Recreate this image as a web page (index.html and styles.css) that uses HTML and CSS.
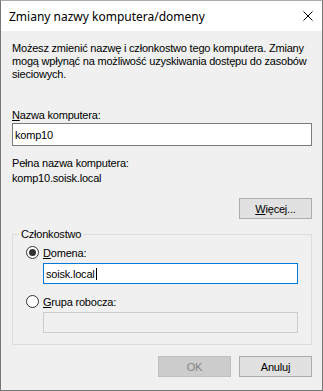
FILE: index.html
```html
<!DOCTYPE html>
<html lang="pl">
<head>
<meta charset="utf-8">
<title>Zmiany nazwy komputera/domeny</title>
<link rel="stylesheet" href="styles.css">
</head>
<body>
<div class="window">
  <div class="titlebar">
    <span class="title">Zmiany nazwy komputera/domeny</span>
    <svg class="close" width="10" height="10" viewBox="0 0 10 10"><path d="M0.5 0.5 L9.5 9.5 M9.5 0.5 L0.5 9.5" stroke="#000" stroke-width="1" fill="none"/></svg>
  </div>
  <div class="content">
    <p class="desc">Możesz zmienić nazwę i członkostwo tego komputera. Zmiany mogą wpłynąć na możliwość uzyskiwania dostępu do zasobów sieciowych.</p>
    <div class="label name"><u>N</u>azwa komputera:</div>
    <div class="input main"><span>komp10</span></div>
    <div class="label full">Pełna nazwa komputera:</div>
    <div class="label fqdn">komp10.soisk.local</div>
    <div class="more-row"><div class="btn"><u>W</u>ięcej...</div></div>
    <div class="group">
      <div class="legend">Członkostwo</div>
      <div class="radio-row"><span class="radio checked"></span><span><u>D</u>omena:</span></div>
      <div class="input focus sub"><span>soisk.local</span><span class="caret"></span></div>
      <div class="radio-row"><span class="radio"></span><span><u>G</u>rupa robocza:</span></div>
      <div class="input disabled sub"></div>
    </div>
    <div class="buttons">
      <div class="btn dis">OK</div>
      <div class="btn">Anuluj</div>
    </div>
  </div>
</div>
</body>
</html>
```
FILE: styles.css
```css
html, body { margin: 0; padding: 0; background: #f0f0f0; }
.window {
  width: 323px; height: 391px; box-sizing: border-box;
  border: 1px solid #777777; border-top-color: #aaaaaa;
  background: #f0f0f0;
  font-family: "Liberation Sans", Arial, sans-serif; font-size: 11px; color: #000;
  display: flex; flex-direction: column;
}
.titlebar {
  height: 30px; background: #ffffff; display: flex; align-items: center;
  padding: 0 9px 0 8px;
}
.title { font-family: "Noto Sans", "Open Sans", sans-serif; font-size: 12px; flex: 1; padding-top: 1px; }
.close { display: block; }
.content { padding: 11px 10px 0 11px; flex: 1; letter-spacing: -0.2px; }
.desc { margin: 0 -6px 0 0; line-height: 13px; }
u { text-decoration: underline; text-underline-offset: 1px; }
.label { line-height: 13px; }
.name { margin-top: 28px; }
.input {
  box-sizing: border-box; border: 1px solid #7a7a7a; background: #fff;
  display: flex; align-items: center; padding-left: 2px;
}
.input.main { height: 23px; margin-top: 1px; }
.input.focus { border-color: #0078d7; }
.input.disabled { border-color: #cccccc; background: #f0f0f0; }
.caret { display: inline-block; width: 1px; height: 12px; background: #000; margin-left: 1px; }
.full { margin-top: 11px; }
.fqdn { margin-top: 2px; }
.more-row { display: flex; justify-content: flex-end; margin-top: 13px; }
.btn {
  width: 73px; height: 21px; box-sizing: border-box; border: 1px solid #adadad; background: #e1e1e1;
  display: flex; align-items: center; justify-content: center;
}
.btn.dis { background: #cccccc; border-color: #bfbfbf; color: #838383; }
.group {
  margin-top: 15px; border: 1px solid #dcdcdc; box-sizing: border-box;
  position: relative; padding: 0 13px 11px 13px;
}
.legend {
  position: absolute; top: -7px; left: 6px; background: #f0f0f0; padding: 0 2px; line-height: 13px;
}
.radio-row { display: flex; align-items: center; gap: 4px; height: 13px; margin-top: 11px; }
.radio {
  width: 13px; height: 13px; box-sizing: border-box; border: 1px solid #333; border-radius: 50%;
  background: #fff; display: flex; align-items: center; justify-content: center; flex: none;
}
.radio.checked::after { content: ""; width: 7px; height: 7px; border-radius: 50%; background: #333; }
.sub { height: 21px; margin-left: 17px; margin-top: 4px; }
.buttons { display: flex; justify-content: flex-end; gap: 8px; margin-top: 11px; }
```
